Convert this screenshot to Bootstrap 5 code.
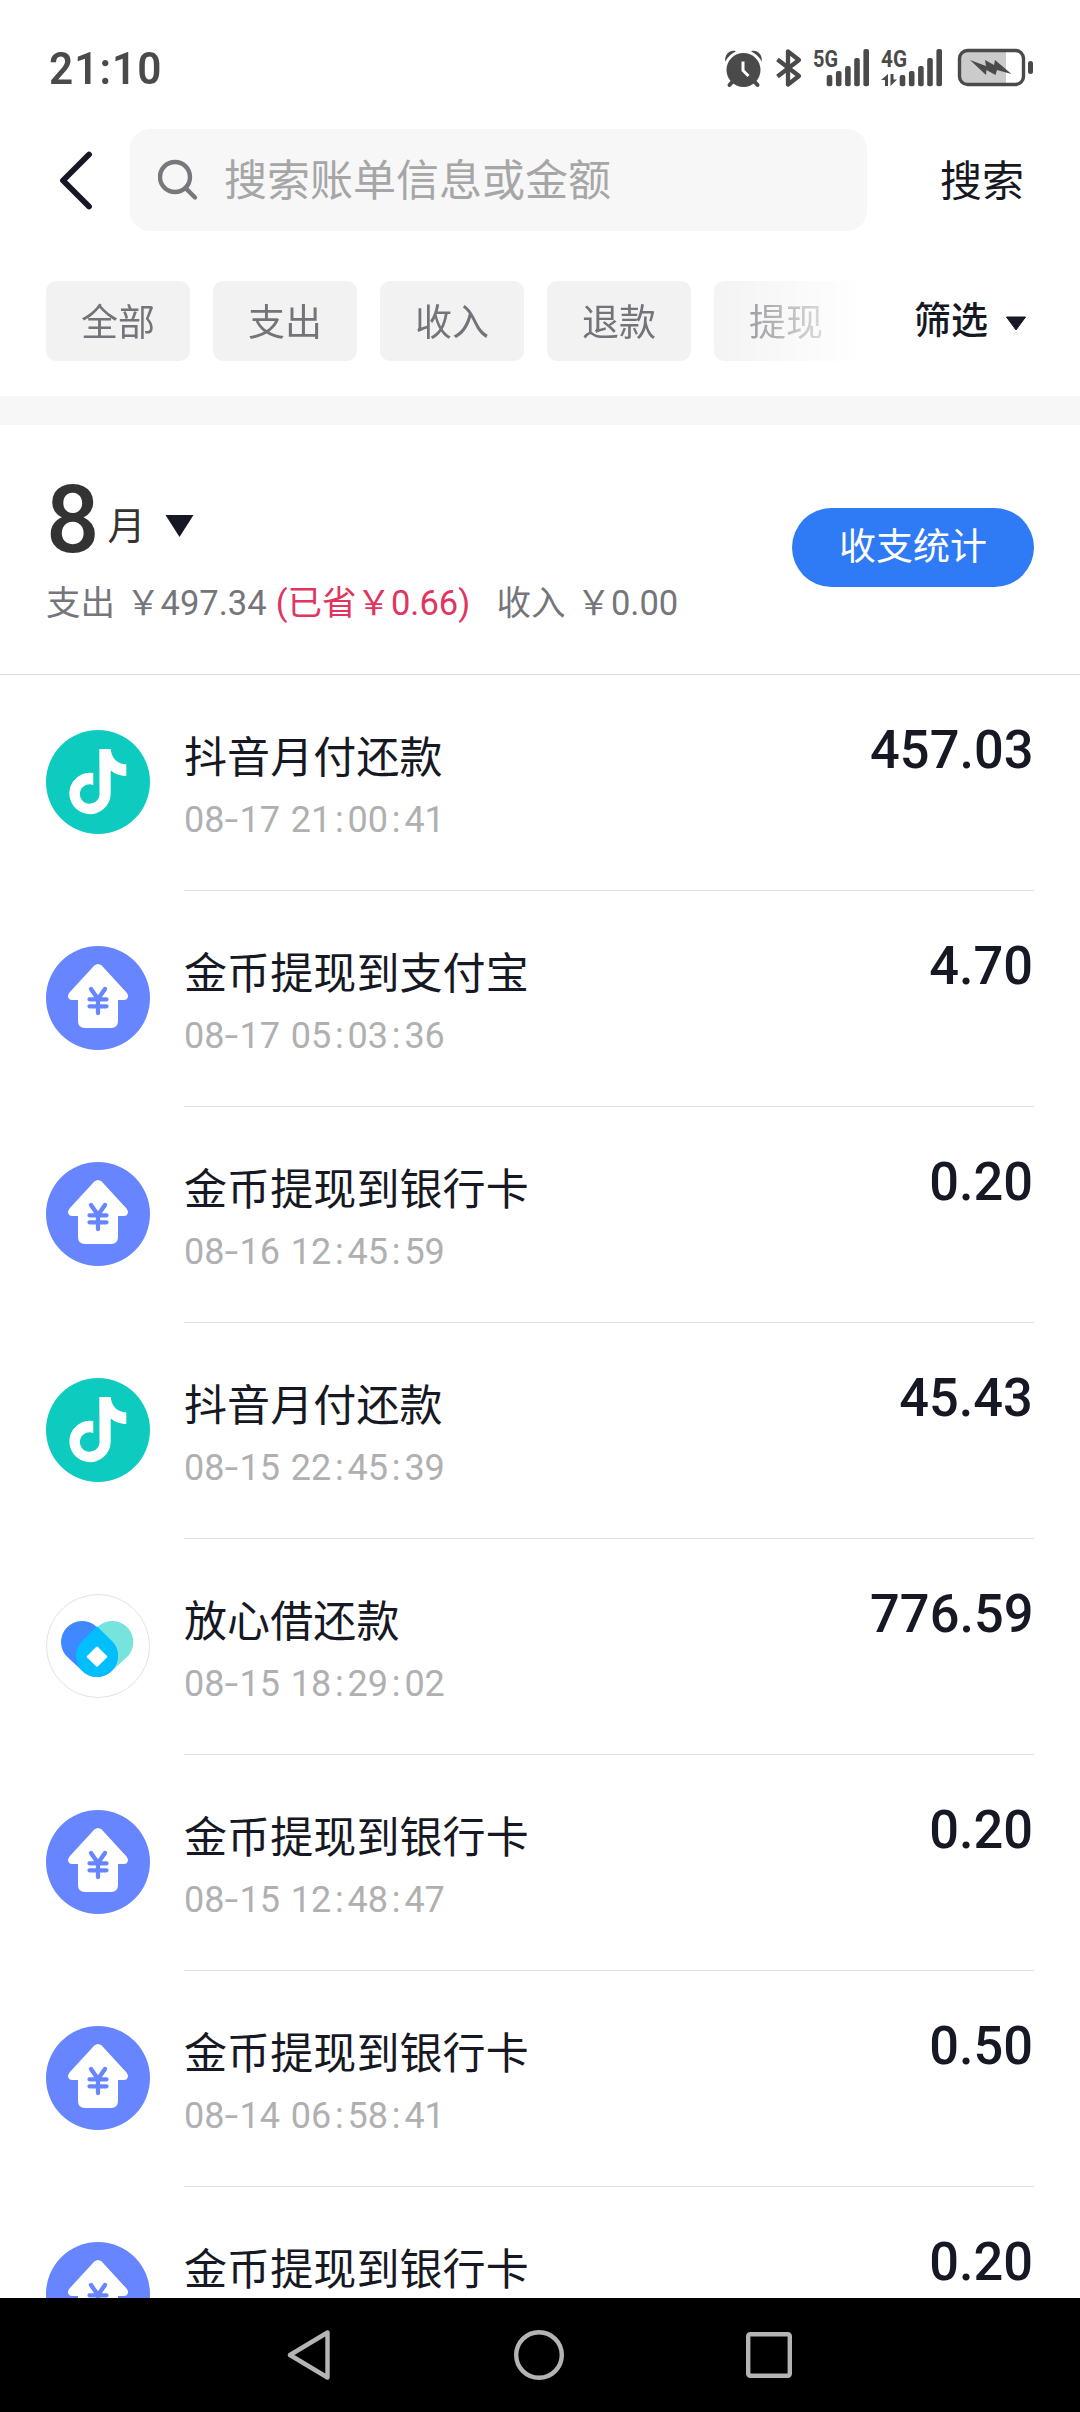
<!DOCTYPE html>
<html lang="zh-CN">
<head>
<meta charset="utf-8">
<meta name="viewport" content="width=device-width, initial-scale=1">
<title>账单</title>
<link href="https://cdn.jsdelivr.net/npm/bootstrap@5.3.0/dist/css/bootstrap.min.css" rel="stylesheet">
<style>
  body { font-family: Roboto, "Noto Sans CJK SC", sans-serif; color: #161823; background: #fff; }
  svg { display: block; flex: none; }
  .screen { width: 1080px; height: 2412px; }
  .status { height: 129px; padding: 7px 46px 0 49px; color: #4a4a4a; }
  .status svg { overflow: visible; }
  .clock { font-size: 45px; font-weight: 600; letter-spacing: 1.1px; line-height: 1; transform: scaleX(.94); transform-origin: left; }
  .search-row { height: 102px; padding-left: 58px; padding-right: 56px; }
  .search-box { width: 737px; height: 102px; margin-left: 36px; padding-left: 28px; border-radius: 20px; background: #f7f7f7; color: #a6a6a6; font-size: 43px; line-height: 1; }
  .search-box span, .search-btn { padding-top: 3px; }
  .search-btn { font-size: 42px; line-height: 1; }
  .filters { padding: 50px 53px 35px 46px; }
  .chips { gap: 23px; width: 812px; -webkit-mask-image: linear-gradient(90deg, #000 650px, transparent 822px); mask-image: linear-gradient(90deg, #000 650px, transparent 822px); }
  .chip { width: 144px; height: 80px; padding-top: 4px; border-radius: 10px; background: #f2f2f2; color: #737379; font-size: 37px; line-height: 1; flex: none; }
  .filter-btn { font-size: 37px; font-weight: 500; line-height: 1; }
  .filter-btn svg { margin: 4px 0 0 17px; }
  .band { height: 29px; background: #f7f7f7; }
  .month { height: 250px; border-bottom: 1px solid #dcdcdc; padding: 0 46px; }
  .month-head { margin-top: 60px; height: 70px; }
  .month-num { font-size: 94px; font-weight: 500; line-height: 70px; color: #333; }
  .month-unit { font-size: 38px; line-height: 37px; color: #333; padding-bottom: 2px; }
  .month-arrow { margin: 0 0 18px 20px; }
  .totals { margin-top: 28px; font-size: 34.5px; line-height: 40px; word-spacing: 2.5px; color: #75757b; white-space: pre; }
  .saved { color: #e0355f; margin: 0 4px 0 -2px; }
  .stat-btn { width: 242px; height: 79px; margin-top: 83px; background: #2f7bf6; color: #fff; font-size: 37px; line-height: 1; }
  .bills { min-height: 0; }
  .bill { height: 216px; padding-left: 46px; flex: none; }
  .bill-icon { margin-top: 55px; width: 104px; height: 104px; }
  .bill-main { margin-left: 34px; margin-right: 46px; border-bottom: 1px solid #dfdfdf; }
  .bill-title { font-size: 43px; line-height: 50px; margin-top: 58px; letter-spacing: .1px; }
  .bill-time { font-size: 36px; line-height: 40px; margin-top: 17px; color: #b0b0b0; word-spacing: 2px; }
  .bill-time span { padding: 0 3.8px; }
  .bill-time span:first-child { display: inline-block; padding: 0 2.5px; transform: scaleX(1.35); }
  .amount { font-size: 54px; font-weight: 500; line-height: 54px; margin-top: 48px; padding-right: 1px; transform: scaleX(.97); transform-origin: right; }
  .sysnav { height: 114px; background: #000; padding: 0 288px 0 287px; }
</style>
</head>
<body>
<svg width="0" height="0" class="position-absolute">
  <symbol id="i-note" viewBox="0 0 104 104">
    <circle cx="52" cy="52" r="52" fill="#0dcbbf"/>
    <path fill="#fff" d="M53.3 19H64.7C65.5 28 71 34 80.3 34.3V46C74 46 68.5 43.5 64.7 40.5V64.6A20.7 20.7 0 1 1 47.3 43V54.9A9.8 9.8 0 1 0 53.5 64Z"/>
  </symbol>
  <symbol id="i-coin" viewBox="0 0 104 104">
    <circle cx="52" cy="52" r="52" fill="#6685ff"/>
    <path fill="#fff" d="M48.3 19.6Q52 16.400 55.700 19.600L80.500 46.500Q82.600 49 81.800 51.500Q80.800 54 78 54H72V75Q72 82 65 82H39Q32 82 32 75V54H26Q23.200 54 22.200 51.500Q21.400 49 23.500 46.500Z"/>
    <path fill="none" stroke="#6685ff" stroke-width="4.300" stroke-linecap="round" d="M45 43L52 53L59 43M43.500 53.300H60.500M43.500 60.300H60.500M52 53V67"/>
  </symbol>
  <symbol id="i-heart" viewBox="0 0 104 104">
    <circle cx="52" cy="52" r="51.500" fill="#fff" stroke="#e3e3e3"/>
    <path stroke="#76e4dc" stroke-width="42" stroke-linecap="round" d="M66.300 48L51 62"/>
    <path stroke="#4088ff" stroke-width="42" stroke-linecap="round" d="M36 48L51 62"/>
    <path fill="#00bfff" d="M51 32.300L65.300 46.500A21 21 0 1 1 36.700 46.500Z"/>
    <path fill="#fff" stroke="#fff" stroke-width="2" stroke-linejoin="round" d="M51 53.500L60.300 62.700L51 71.900L41.700 62.700Z"/>
  </symbol>
</svg>

<div class="screen d-flex flex-column overflow-hidden">
  <header class="status d-flex align-items-center justify-content-between flex-shrink-0">
    <div class="clock">21:10</div>
    <svg width="310" height="40" viewBox="724 48 310 40" fill="#4a4a4a">
      <circle cx="743.500" cy="70" r="17"/>
      <path d="M725.200 61.500C724.500 54 730 49.500 736 51.200Q729 54.500 725.200 61.500ZM761.800 61.500C762.500 54 757 49.500 751 51.200Q758 54.500 761.800 61.500Z"/>
      <path d="M733 81L729.500 85M754 81L757.500 85" stroke="#4a4a4a" stroke-width="4" stroke-linecap="round"/>
      <path d="M743 61.500V70.500L748.500 76" fill="none" stroke="#fff" stroke-width="3"/>
      <path d="M777.500 59.500L799 76L788 84.500V51.500L799 60L777.500 76.500" fill="none" stroke="#4a4a4a" stroke-width="4.300" stroke-linejoin="round"/>
      <text x="813" y="66.500" font-size="24.500" font-weight="700" textLength="25" lengthAdjust="spacingAndGlyphs">5G</text>
      <g id="bars5">
        <rect x="826.700" y="75" width="5.600" height="11.300" rx="2"/>
        <rect x="835.900" y="71" width="5.600" height="15.300" rx="2"/>
        <rect x="845.100" y="66" width="5.600" height="20.300" rx="2"/>
        <rect x="854.200" y="58" width="5.600" height="28.300" rx="2"/>
        <rect x="863.400" y="49" width="5.600" height="37.300" rx="2"/>
      </g>
      <text x="881" y="66.500" font-size="24.500" font-weight="700" textLength="26" lengthAdjust="spacingAndGlyphs">4G</text>
      <use href="#bars5" x="73"/>
      <path d="M885 86V80H881L888 74V86ZM890.500 74V86L897 79.500H893.500V74Z"/>
      <path d="M967 50.500H1006V84.500H967Q959.500 84.500 959.500 76.500V58.500Q959.500 50.500 967 50.500Z" fill="#cbcbcb"/>
      <rect x="959.500" y="50.500" width="64" height="34" rx="8" fill="none" stroke="#4a4a4a" stroke-width="3.400"/>
      <rect x="1028" y="61" width="5" height="13" rx="2.500"/>
      <path d="M970 60L986 66L985 60L994 65L995 60L1011.500 74L997 70L995.500 75L986.500 70L986 75Z"/>
    </svg>
  </header>

  <div class="search-row d-flex align-items-center flex-shrink-0">
    <svg width="36" height="60" viewBox="0 0 36 60"><path d="M31 4.500L5 30.500L31 56.500" fill="none" stroke="#161823" stroke-width="5.800" stroke-linecap="round" stroke-linejoin="round"/></svg>
    <div class="search-box d-flex align-items-center">
      <svg width="42" height="42" viewBox="0 0 42 42" fill="none" stroke="#77777c" stroke-width="4.400"><circle cx="17" cy="18" r="15"/><path d="M27.500 29L37 38.500" stroke-linecap="round"/></svg>
      <span class="ms-4">搜索账单信息或金额</span>
    </div>
    <div class="search-btn ms-auto">搜索</div>
  </div>

  <div class="filters d-flex align-items-center justify-content-between flex-shrink-0">
    <div class="chips d-flex">
      <div class="chip d-flex align-items-center justify-content-center">全部</div>
      <div class="chip d-flex align-items-center justify-content-center">支出</div>
      <div class="chip d-flex align-items-center justify-content-center">收入</div>
      <div class="chip d-flex align-items-center justify-content-center">退款</div>
      <div class="chip d-flex align-items-center justify-content-center">提现</div>
    </div>
    <div class="filter-btn d-flex align-items-center">筛选<svg width="22" height="15" viewBox="0 0 22 15"><path d="M1.500 1H20.500L11 14Z" fill="#161823" stroke="#161823" stroke-linejoin="round"/></svg></div>
  </div>
  <div class="band flex-shrink-0"></div>

  <section class="month d-flex justify-content-between flex-shrink-0">
    <div>
      <div class="month-head d-flex align-items-end">
        <span class="month-num">8</span>
        <span class="month-unit ms-2 mb-2">月</span>
        <svg class="month-arrow" width="29" height="22" viewBox="0 0 29 22"><path d="M.500 0H28.500L14.500 22Z" fill="#161823"/></svg>
      </div>
      <div class="totals">支出 ￥497.34 <span class="saved">(已省￥0.66)</span>  收入 ￥0.00</div>
    </div>
    <div class="stat-btn rounded-pill d-flex align-items-center justify-content-center">收支统计</div>
  </section>

  <main class="bills flex-grow-1 d-flex flex-column overflow-hidden">
    <div class="bill d-flex"><svg class="bill-icon"><use href="#i-note"/></svg><div class="bill-main flex-grow-1 d-flex justify-content-between"><div><div class="bill-title">抖音月付还款</div><div class="bill-time">08<span>-</span>17 21<span>:</span>00<span>:</span>41</div></div><div class="amount">457.03</div></div></div>
    <div class="bill d-flex"><svg class="bill-icon"><use href="#i-coin"/></svg><div class="bill-main flex-grow-1 d-flex justify-content-between"><div><div class="bill-title">金币提现到支付宝</div><div class="bill-time">08<span>-</span>17 05<span>:</span>03<span>:</span>36</div></div><div class="amount">4.70</div></div></div>
    <div class="bill d-flex"><svg class="bill-icon"><use href="#i-coin"/></svg><div class="bill-main flex-grow-1 d-flex justify-content-between"><div><div class="bill-title">金币提现到银行卡</div><div class="bill-time">08<span>-</span>16 12<span>:</span>45<span>:</span>59</div></div><div class="amount">0.20</div></div></div>
    <div class="bill d-flex"><svg class="bill-icon"><use href="#i-note"/></svg><div class="bill-main flex-grow-1 d-flex justify-content-between"><div><div class="bill-title">抖音月付还款</div><div class="bill-time">08<span>-</span>15 22<span>:</span>45<span>:</span>39</div></div><div class="amount">45.43</div></div></div>
    <div class="bill d-flex"><svg class="bill-icon"><use href="#i-heart"/></svg><div class="bill-main flex-grow-1 d-flex justify-content-between"><div><div class="bill-title">放心借还款</div><div class="bill-time">08<span>-</span>15 18<span>:</span>29<span>:</span>02</div></div><div class="amount">776.59</div></div></div>
    <div class="bill d-flex"><svg class="bill-icon"><use href="#i-coin"/></svg><div class="bill-main flex-grow-1 d-flex justify-content-between"><div><div class="bill-title">金币提现到银行卡</div><div class="bill-time">08<span>-</span>15 12<span>:</span>48<span>:</span>47</div></div><div class="amount">0.20</div></div></div>
    <div class="bill d-flex"><svg class="bill-icon"><use href="#i-coin"/></svg><div class="bill-main flex-grow-1 d-flex justify-content-between"><div><div class="bill-title">金币提现到银行卡</div><div class="bill-time">08<span>-</span>14 06<span>:</span>58<span>:</span>41</div></div><div class="amount">0.50</div></div></div>
    <div class="bill d-flex"><svg class="bill-icon"><use href="#i-coin"/></svg><div class="bill-main flex-grow-1 d-flex justify-content-between"><div><div class="bill-title">金币提现到银行卡</div></div><div class="amount">0.20</div></div></div>
  </main>

  <nav class="sysnav d-flex align-items-center justify-content-between flex-shrink-0">
    <svg width="44" height="52" viewBox="0 0 44 52"><path d="M40.500 3.500V48.500L3 26Z" fill="none" stroke="#b4b4b4" stroke-width="4.400" stroke-linejoin="round"/></svg>
    <svg width="50" height="50" viewBox="0 0 50 50"><circle cx="25" cy="25" r="22.800" fill="none" stroke="#b4b4b4" stroke-width="4.400"/></svg>
    <svg width="46" height="46" viewBox="0 0 46 46"><rect x="2.200" y="2.200" width="41.600" height="41.600" rx="2" fill="none" stroke="#b4b4b4" stroke-width="4.400"/></svg>
  </nav>
</div>
<script src="https://cdn.jsdelivr.net/npm/bootstrap@5.3.0/dist/js/bootstrap.bundle.min.js"></script>
</body>
</html>
